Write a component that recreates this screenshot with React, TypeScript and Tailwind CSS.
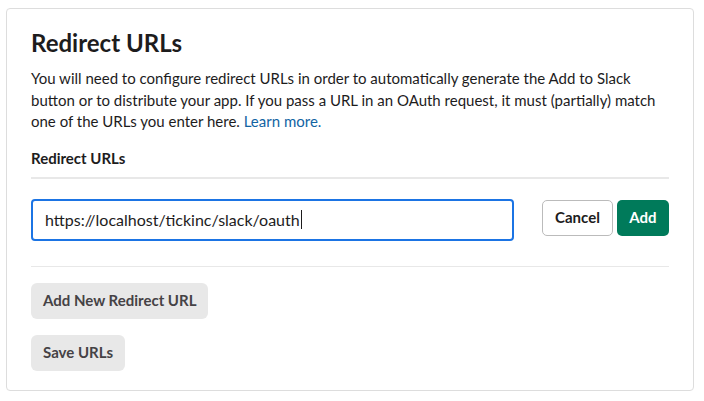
export default function App() {
  return (
    <div className="min-h-screen bg-white px-[6px] pt-[8px] font-['Lato',sans-serif] text-[#1d1c1d]">
      <section className="flex h-[383px] w-[688px] flex-col rounded-[4px] border border-[#dddddd] px-[24px] pt-[19px]">
        <h1 className="text-[24px] font-bold leading-[30px]">Redirect URLs</h1>
        <p className="mt-[10px] text-[15px] leading-[21.5px]">
          You will need to configure redirect URLs in order to automatically generate the Add to Slack button or to
          distribute your app. If you pass a URL in an OAuth request, it must (partially) match one of the URLs you
          enter here. <a className="text-[#1264a3]">Learn more.</a>
        </p>
        <h2 className="mt-[14px] text-[15px] font-bold leading-[22px]">Redirect URLs</h2>
        <div className="mt-[8px] h-[2px] bg-[#e8e8e8]" />

        <div className="mt-[20px] flex items-start gap-[4px]">
          <div className="flex h-[42px] w-[483px] items-center rounded-[4px] border-2 border-[#1b74e4] px-[12px] text-[16px]">
            https://localhost/tickinc/slack/oauth
            <span className="ml-px h-[19px] w-px bg-[#1d1c1d]" />
          </div>
          <button
            type="button"
            className="ml-auto mt-px h-[36px] w-[71px] rounded-[5px] border border-[#bbbbbb] bg-white text-[15px] font-bold"
          >
            Cancel
          </button>
          <button
            type="button"
            className="mt-px h-[36px] w-[52px] rounded-[5px] bg-[#007a5a] text-[15px] font-bold text-white"
          >
            Add
          </button>
        </div>

        <div className="mt-[25px] h-px bg-[#e8e8e8]" />

        <div className="mt-[16px] flex flex-col items-start gap-[16px]">
          <button
            type="button"
            className="h-[36px] rounded-[6px] bg-[#e8e8e8] px-[12px] text-[15px] font-bold text-[#454245]"
          >
            Add New Redirect URL
          </button>
          <button
            type="button"
            className="h-[36px] rounded-[6px] bg-[#e8e8e8] px-[12px] text-[15px] font-bold text-[#454245]"
          >
            Save URLs
          </button>
        </div>
      </section>
    </div>
  );
}
